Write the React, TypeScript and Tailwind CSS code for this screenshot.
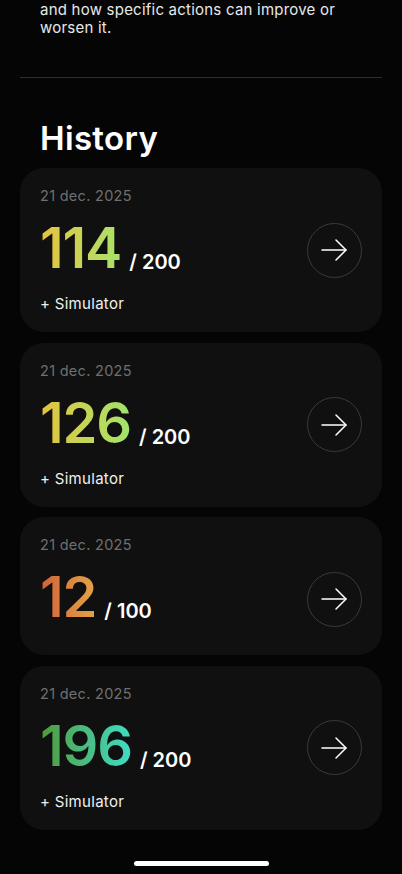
interface Entry {
  id: number;
  date: string;
  score: number;
  max: number;
  simulator: boolean;
  gradient: string;
}

const entries: Entry[] = [
  { id: 1, date: '21 dec. 2025', score: 114, max: 200, simulator: true, gradient: 'from-[#e6c23c] to-[#a6e36a]' },
  { id: 2, date: '21 dec. 2025', score: 126, max: 200, simulator: true, gradient: 'from-[#e3c33a] to-[#9fe46c]' },
  { id: 3, date: '21 dec. 2025', score: 12, max: 100, simulator: false, gradient: 'from-[#d3603a] to-[#e2a446]' },
  { id: 4, date: '21 dec. 2025', score: 196, max: 200, simulator: true, gradient: 'from-[#4f9a34] to-[#3fdcc6]' },
];

function Arrow() {
  return (
    <svg width="27" height="24" viewBox="0 0 27 24" fill="none" stroke="white" strokeWidth="1.5" strokeLinecap="round" strokeLinejoin="round">
      <path d="M1 12h24" />
      <path d="M15 2l10 10-10 10" />
    </svg>
  );
}

export default function App() {
  return (
    <div
      className="min-h-screen bg-[#050505] text-white"
      style={{ fontFamily: 'Inter, "Noto Sans", sans-serif' }}
    >
      <div className="px-10 pt-[1px] text-[15px] leading-[18px] tracking-[0.015em] text-[#e8e8e8]">
        <p>
          and how specific actions can improve or
          <br />
          worsen it.
        </p>
      </div>

      <div className="mx-5 mt-[40px] border-t border-[#2e2e2e]" />

      <h2 className="px-10 pt-[40px] text-[33px] font-semibold leading-[40px] tracking-[0.01em]">History</h2>

      <div className="mt-[10px] flex flex-col gap-[10.5px] px-5">
        {entries.map((e) => (
          <div
            key={e.id}
            className={`rounded-[24px] bg-[#101010] px-5 pt-[19px] ${e.simulator ? 'pb-[19px]' : 'pb-[34px]'}`}
          >
            <div className="text-[14.5px] leading-[18px] tracking-[0.02em] text-[#6f6f6f]">{e.date}</div>
            <div className="mt-[19px] flex items-center justify-between">
              <div className="flex items-end">
                <span
                  className={`bg-gradient-to-r ${e.gradient} bg-clip-text text-[56px] font-semibold leading-[48px] tracking-[-0.02em] text-transparent`}
                >
                  {e.score}
                </span>
                <span className="ml-2 text-[20px] font-semibold leading-[20px]">/ {e.max}</span>
              </div>
              <div className="-mt-[2px] -mb-[6px] flex h-[55px] w-[55px] items-center justify-center rounded-full border border-[#3a3a3a]">
                <Arrow />
              </div>
            </div>
            {e.simulator && (
              <div className="mt-[23px] text-[15px] leading-[18px] tracking-[0.02em] text-[#f0f0f0]">+ Simulator</div>
            )}
          </div>
        ))}
      </div>

      <div className="flex justify-center pb-[9px] pt-[31px]">
        <div className="h-[5px] w-[135px] rounded-full bg-white" />
      </div>
    </div>
  );
}
